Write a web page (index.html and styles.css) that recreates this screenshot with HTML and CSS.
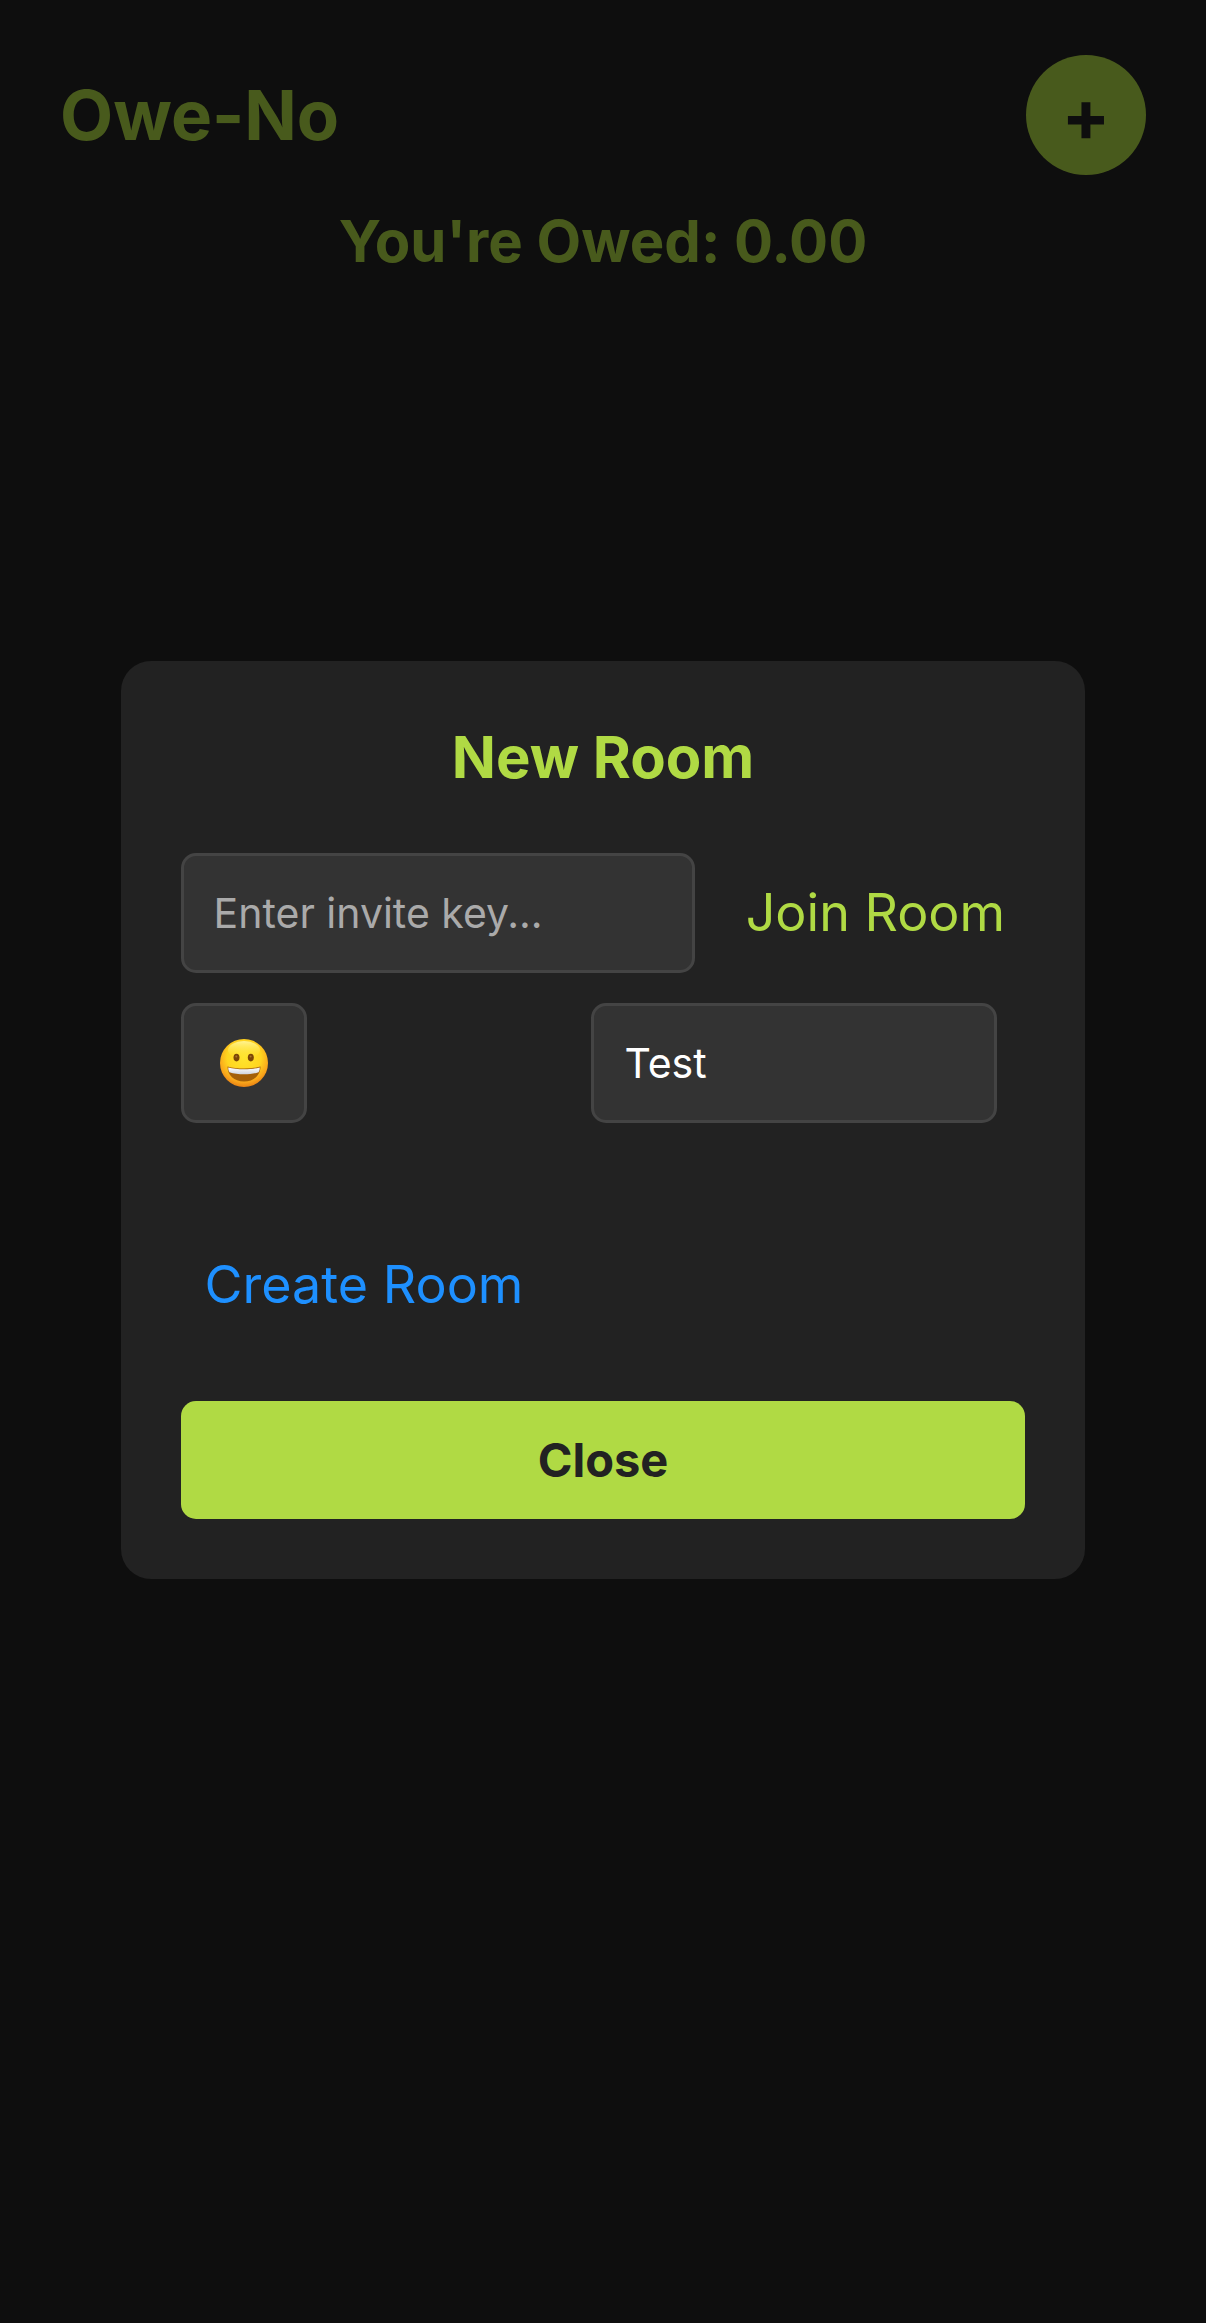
FILE: index.html
```html
<!DOCTYPE html>
<html lang="en">
<head>
  <meta charset="utf-8">
  <meta name="viewport" content="width=device-width, initial-scale=1">
  <title>Owe-No</title>
  <link rel="stylesheet" href="styles.css">
</head>
<body>
  <div class="app">
    <header class="app-header">
      <h1 class="brand">Owe-No</h1>
      <button class="add-button" type="button" aria-label="New room">+</button>
    </header>
    <p class="balance">You're Owed: 0.00</p>
  </div>

  <div class="overlay">
    <section class="modal" role="dialog" aria-modal="true" aria-labelledby="modal-title">
      <h2 class="modal-title" id="modal-title">New Room</h2>
      <form class="join-row">
        <input class="field" type="text" placeholder="Enter invite key..." aria-label="Invite key">
        <button class="text-button join-button" type="button">Join Room</button>
      </form>
      <form class="create-form">
        <div class="create-row">
          <button class="field emoji-button" type="button" aria-label="Room emoji: grinning face">
            <svg class="emoji" viewBox="0 0 48 48" aria-hidden="true">
              <defs>
                <radialGradient id="face" cx="50%" cy="38%" r="64%">
                  <stop offset="0" stop-color="#ffe52e"/>
                  <stop offset=".55" stop-color="#ffd51f"/>
                  <stop offset=".82" stop-color="#f9a51b"/>
                  <stop offset="1" stop-color="#e67b12"/>
                </radialGradient>
                <linearGradient id="shine" x1="0" y1="0" x2="0" y2="1">
                  <stop offset="0" stop-color="#fffbb0" stop-opacity=".8"/>
                  <stop offset="1" stop-color="#ffe833" stop-opacity="0"/>
                </linearGradient>
                <linearGradient id="teeth" x1="0" y1="0" x2="0" y2="1">
                  <stop offset="0" stop-color="#ffffff"/>
                  <stop offset="1" stop-color="#cfd3dc"/>
                </linearGradient>
              </defs>
              <circle cx="24" cy="24" r="24" fill="url(#face)"/>
              <ellipse cx="24" cy="11" rx="16" ry="9" fill="url(#shine)"/>
              <ellipse cx="16.500" cy="18.600" rx="3" ry="3.800" fill="#7b4506"/>
              <ellipse cx="30.800" cy="18.600" rx="3" ry="3.800" fill="#7b4506"/>
              <circle cx="16.300" cy="17.400" r="1" fill="#a9742a"/>
              <circle cx="30.600" cy="17.400" r="1" fill="#a9742a"/>
              <path d="M7.500 27.500C17 30.300 31 30.300 40.500 27.500C40.500 36 34 42.500 24 42.500S7.500 36 7.500 27.500Z" fill="#a45f08"/>
              <path d="M8.300 28.400C17 30.800 31 30.800 39.700 28.400C39.800 30.600 39.400 32 38.600 33.200C30 36 18 36 9.400 33.200C8.600 32 8.200 30.600 8.300 28.400Z" fill="url(#teeth)"/>
            </svg>
          </button>
          <input class="field" type="text" value="Test" aria-label="Room name">
        </div>
        <button class="text-button create-button" type="button">Create Room</button>
      </form>
      <button class="close-button" type="button">Close</button>
    </section>
  </div>
</body>
</html>
```
FILE: styles.css
```css
*,
*::before,
*::after {
  box-sizing: border-box;
}

:root {
  --lime: #b0da44;
  --surface: #222;
  --field: #333;
  --line: #444;
  --blue: #1e90ff;
}

body {
  margin: 0;
  background: var(--surface);
  color: #fff;
  font-family: Inter, "Liberation Sans", sans-serif;
}

h1,
h2,
p {
  margin: 0;
}

button,
input {
  margin: 0;
  padding: 0;
  border: 0;
  font: inherit;
}

.app {
  min-height: 100vh;
  padding: 55px 60px;
}

.app-header {
  display: flex;
  align-items: center;
  justify-content: space-between;
}

.brand {
  color: var(--lime);
  font-size: 69px;
  font-weight: 700;
  line-height: 84px;
}

.add-button {
  width: 120px;
  height: 120px;
  border-radius: 50%;
  background: var(--lime);
  color: var(--surface);
  font-size: 72px;
  font-weight: 700;
  line-height: 84px;
}

.balance {
  margin-top: 30px;
  color: var(--lime);
  font-size: 58px;
  font-weight: 700;
  line-height: 72px;
  text-align: center;
}

.overlay {
  position: fixed;
  inset: 0;
  display: flex;
  align-items: center;
  justify-content: center;
  padding-bottom: 84px;
  background: rgba(0, 0, 0, 0.59);
}

.modal {
  width: 80%;
  padding: 60px;
  border-radius: 30px;
  background: var(--surface);
}

.modal-title {
  margin-bottom: 60px;
  color: var(--lime);
  font-size: 58px;
  font-weight: 700;
  line-height: 72px;
  text-align: center;
}

.field {
  width: 100%;
  min-width: 0;
  height: 120px;
  padding: 0 30px;
  border: 3px solid var(--line);
  border-radius: 15px;
  background: var(--field);
  color: #fff;
  font-size: 41px;
}

.field::placeholder {
  color: #aaa;
  opacity: 1;
}

.join-row {
  display: grid;
  grid-template-columns: 1fr 300px;
  gap: 30px;
  margin-bottom: 30px;
}

.create-row {
  display: flex;
  justify-content: space-between;
  margin-bottom: 106px;
  padding-right: 28px;
}

.create-row .field {
  flex: 0 0 406px;
}

.create-row .emoji-button {
  display: flex;
  flex-basis: 126px;
  align-items: center;
  justify-content: center;
  padding: 0;
}

.emoji {
  width: 48px;
  height: 48px;
}

.text-button {
  background: none;
  font-size: 52px;
  white-space: nowrap;
}

.join-button {
  color: var(--lime);
}

.create-button {
  height: 112px;
  padding: 0 24px;
  color: var(--blue);
}

.create-form {
  margin-bottom: 60px;
}

.close-button {
  display: block;
  width: 100%;
  height: 118px;
  border-radius: 15px;
  background: var(--lime);
  color: var(--surface);
  font-size: 47px;
  font-weight: 700;
}
```
